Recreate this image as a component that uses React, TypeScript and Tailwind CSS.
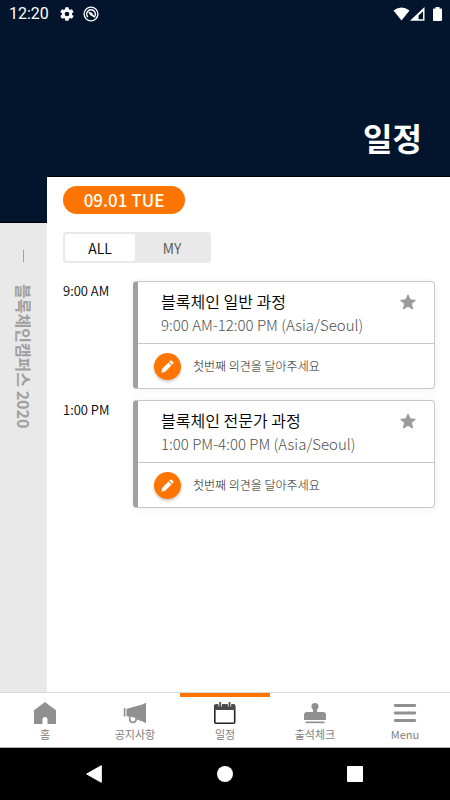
import { useState } from "react";

type Session = { id: number; time: string; title: string; range: string };

const sessions: Session[] = [
  { id: 1, time: "9:00 AM", title: "블록체인 일반 과정", range: "9:00 AM-12:00 PM (Asia/Seoul)" },
  { id: 2, time: "1:00 PM", title: "블록체인 전문가 과정", range: "1:00 PM-4:00 PM (Asia/Seoul)" },
];

function StatusBar() {
  return (
    <div className="flex h-7 items-center justify-between pr-2 pl-[9px] text-white">
      <div className="flex items-center">
        <span className="w-[51px] font-[Roboto,sans-serif] text-base leading-7">12:20</span>
        <svg width="16" height="16" viewBox="0 0 24 24" fill="currentColor" className="-ml-px">
          <path d="M19.4 13a7.800 7.800 0 0 0 0-2l2.200-1.700a.5.500 0 0 0 .1-.7l-2-3.400a.5.500 0 0 0-.6-.2l-2.600 1a7.500 7.500 0 0 0-1.700-1l-.4-2.600a.5.500 0 0 0-.5-.4h-4a.5.500 0 0 0-.5.400L9 5a7.500 7.500 0 0 0-1.700 1l-2.500-1a.5.500 0 0 0-.6.200l-2 3.400a.5.500 0 0 0 .1.700L4.500 11a7.800 7.800 0 0 0 0 2l-2.200 1.700a.5.500 0 0 0-.1.700l2 3.400c.1.200.4.300.6.200l2.500-1a7.500 7.500 0 0 0 1.700 1l.4 2.600c0 .3.200.4.500.4h4c.3 0 .5-.1.500-.4l.4-2.600a7.500 7.500 0 0 0 1.700-1l2.600 1c.2.100.5 0 .6-.2l2-3.400a.5.500 0 0 0-.1-.7zM12 15.500a3.500 3.500 0 1 1 0-7 3.500 3.500 0 0 1 0 7z" />
        </svg>
        <svg width="16" height="16" viewBox="0 0 16 16" fill="none" stroke="currentColor" className="ml-2">
          <circle cx="8" cy="8" r="6.900" strokeWidth="1.400" />
          <path d="M4.800 11a4.300 4.300 0 1 1 6.400 0" strokeWidth="1.500" />
          <path d="M5 5.500l4 1.200 3.200 5.200-4.900-2.700z" fill="currentColor" stroke="none" />
        </svg>
      </div>
      <div className="flex items-center">
        <svg width="17" height="14" viewBox="0 0 17 14" fill="currentColor">
          <path d="M0.500 3.500Q8.500-2.500 16.500 3.500L8.500 13.500z" />
        </svg>
        <svg width="15" height="14" viewBox="0 0 15 14" fill="currentColor">
          <path fillRule="evenodd" d="M0 13.800L14.500 0v13.800zM8.500 12.300h4.500V4.500L8.500 8.500z" />
        </svg>
        <svg width="9" height="14" viewBox="0 0 9 14" fill="currentColor" className="ml-2">
          <path d="M2.500 0h4v1.500H8q1 0 1 1V13q0 1-1 1H1q-1 0-1-1V2.500q0-1 1-1h1.500z" />
        </svg>
      </div>
    </div>
  );
}

function SessionRow({ session }: { session: Session }) {
  const [starred, setStarred] = useState(false);
  return (
    <li className="flex">
      <time className="w-[70px] shrink-0 text-[13px] leading-5 font-[350] text-black">{session.time}</time>
      <article className="min-w-0 flex-1 rounded-[4px] border border-l-[5px] border-[#c8c8c8] border-l-[#a0a0a0] bg-white shadow-[0_1px_8px_rgba(0,0,0,0.06)]">
        <div className="flex h-[62px] items-start justify-between border-b border-[#c8c8c8] pt-[7px] pr-[18px] pl-[23px]">
          <div>
            <h2 className="text-base leading-6 font-[350] text-black">{session.title}</h2>
            <p className="text-[15px] leading-6 font-light text-[#505050]">{session.range}</p>
          </div>
          <button type="button" aria-label="즐겨찾기" aria-pressed={starred} onClick={() => setStarred(!starred)} className="mt-[5px]">
            <svg width="16" height="16" viewBox="0 0 16 16" fill={starred ? "#ff7500" : "#9b9b9b"} stroke={starred ? "#ff7500" : "#9b9b9b"} strokeLinejoin="round">
              <path d="M8 .9l2.100 4.900 5.300.5-4 3.500 1.200 5.200L8 12.300 3.400 15l1.200-5.200-4-3.500 5.300-.5z" />
            </svg>
          </button>
        </div>
        <button type="button" className="flex h-11 w-full items-center gap-3 pl-4">
          <span className="flex size-[27px] items-center justify-center rounded-full bg-[#ff7500] text-white shadow-[0_2px_3px_rgba(0,0,0,0.2)]">
            <svg width="13" height="13" viewBox="0 0 13 13" fill="currentColor">
              <path d="M.3 12.700l.9-3.900L7.500 2.500l3 3-6.300 6.300zM8.200 1.800l1-1q.8-.8 1.600 0l1.400 1.400q.8.800 0 1.600l-1 1z" />
            </svg>
          </span>
          <span className="text-xs leading-5 font-light text-[#202020]">첫번째 의견을 달아주세요</span>
        </button>
      </article>
    </li>
  );
}

const navItems = [
  {
    label: "홈",
    icon: <path d="M12 1L23 9.300V23h-8.500v-4.500a2.500 2.500 0 0 0-5 0V23H1V9.300z" />,
  },
  {
    label: "공지사항",
    icon: (
      <>
        <path d="M.8 7h1.600v8.500H.8zM3.700 8L21.500 3V2H23v20h-1.500v-1L3.700 15z" />
        <circle cx="9.800" cy="18.200" r="4.800" fill="white" />
        <path d="M3.700 8L21.500 3v18L3.700 14.800z" />
        <path d="M6.700 15.500v2.800a3.200 3.200 0 0 0 6.400 0v-1.200" fill="white" stroke="currentColor" strokeWidth="1.700" />
      </>
    ),
  },
  {
    label: "일정",
    icon: (
      <>
        <path d="M2.500 4h18.200q1 0 1 1v16.200q0 1-1 1H2.800q-1 0-1-1V5q0-1 1-1z" fill="none" stroke="#252525" strokeWidth="1.600" />
        <path d="M1.500 3.500h20.500v5.500H1.500z" fill="#4b4b4b" />
        <path d="M7.200 0v5.500M16.500 0v5.500" stroke="white" strokeWidth="3.400" />
        <path d="M7.200 1v6M16.500 1v6" stroke="#4b4b4b" strokeWidth="1.800" />
      </>
    ),
  },
  {
    label: "출석체크",
    icon: (
      <>
        <path d="M10 11V8.700Q8.400 7.300 8.400 5.500a3.600 3.600 0 0 1 7.200 0q0 1.800-1.600 3.200V11H20q3 0 3 3v5H1v-5q0-3 3-3z" />
        <path d="M2.500 20.500h19v1.700h-19z" />
      </>
    ),
  },
  {
    label: "Menu",
    icon: <path d="M2.200 4.500h19.600M2.200 12h19.600M2.200 19.500h19.600" stroke="currentColor" strokeWidth="2.800" strokeLinecap="round" />,
  },
];

export default function App() {
  const [filter, setFilter] = useState("ALL");
  return (
    <div className="flex min-h-screen flex-col bg-white font-['Noto_Sans_CJK_KR',sans-serif]">
      <header className="bg-[#02152c]">
        <StatusBar />
        <h1 className="px-7 pt-[86px] pb-4 text-right text-[32px] leading-[46px] font-bold text-white">일정</h1>
      </header>

      <div className="flex flex-1">
        <aside className="flex w-[47px] shrink-0 flex-col bg-[#e9e9e9]">
          <div className="h-[47px] border-b border-black bg-[#02152c]" />
          <div className="flex flex-col items-center pt-[27px]">
            <span className="h-3 w-px bg-[#a0a0a0]" />
            <p className="mt-[22px] text-base leading-6 font-bold text-[#a0a0a0] [text-orientation:sideways] [writing-mode:vertical-rl]">
              블록체인캠퍼스 2020
            </p>
          </div>
        </aside>

        <main className="min-w-0 flex-1 border-t border-black pr-[15px] pl-4">
          <div className="mt-[9px] flex h-7 w-[122px] items-center justify-center rounded-full bg-[#ff7500] text-[17px] font-medium text-white">
            09.01 TUE
          </div>
          <div className="mt-[18px] flex h-[31px] w-[148px] rounded-[3px] bg-[#e9e9e9] p-0.5">
            {["ALL", "MY"].map((name) => (
              <button
                key={name}
                type="button"
                aria-pressed={filter === name}
                onClick={() => setFilter(name)}
                className={
                  filter === name
                    ? "w-[70px] rounded-[2px] bg-white text-sm leading-5 font-[350] text-black"
                    : "flex-1 text-sm leading-5 font-[350] text-[#505050]"
                }
              >
                {name}
              </button>
            ))}
          </div>
          <ul className="mt-[18px] flex flex-col gap-[11px]">
            {sessions.map((session) => (
              <SessionRow key={session.id} session={session} />
            ))}
          </ul>
        </main>
      </div>

      <nav className="grid h-14 grid-cols-5 border-t border-b border-t-[#d8d8d8] border-b-[#b0b0b0] bg-white">
        {navItems.map((item) => (
          <a
            key={item.label}
            href="#"
            aria-current={item.label === "일정" ? "page" : undefined}
            className={
              item.label === "일정"
                ? "flex flex-col items-center border-t-4 border-[#ff7500] pt-1 text-[#909090]"
                : "flex flex-col items-center pt-2 text-[#909090]"
            }
          >
            <svg width="24" height="24" viewBox="0 0 24 24" fill="currentColor">
              {item.icon}
            </svg>
            <span className="text-[11px] leading-[18px] text-[#808080]">{item.label}</span>
          </a>
        ))}
      </nav>

      <div className="grid h-[52px] grid-cols-[1fr_auto_1fr] items-center bg-black">
        <button type="button" aria-label="Back" className="ml-[86px] w-4">
          <svg width="16" height="18" viewBox="0 0 16 18" fill="white" stroke="white" strokeLinejoin="round">
            <path d="M.7 9L15.300 .7v16.600z" />
          </svg>
        </button>
        <button type="button" aria-label="Home" className="size-4 rounded-full bg-white" />
        <button type="button" aria-label="Recents" className="mr-[87px] size-4 justify-self-end rounded-[1px] bg-white" />
      </div>
    </div>
  );
}
